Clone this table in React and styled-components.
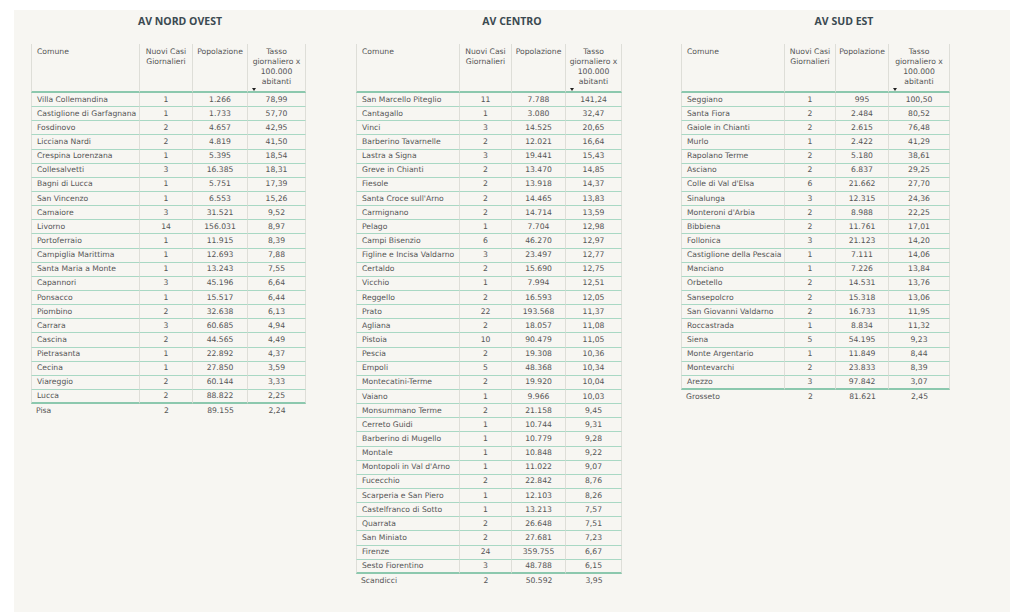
import React from 'react'
import styled, { createGlobalStyle } from 'styled-components'

const GlobalStyle = createGlobalStyle`
  html, body {
    margin: 0;
    padding: 0;
    background: #ffffff;
  }
  body {
    font-family: "DejaVu Sans", Verdana, sans-serif;
  }
`

const row = (s) => s.split('|')

const nordOvest = [
  'Villa Collemandina|1|1.266|78,99',
  'Castiglione di Garfagnana|1|1.733|57,70',
  'Fosdinovo|2|4.657|42,95',
  'Licciana Nardi|2|4.819|41,50',
  'Crespina Lorenzana|1|5.395|18,54',
  'Collesalvetti|3|16.385|18,31',
  'Bagni di Lucca|1|5.751|17,39',
  'San Vincenzo|1|6.553|15,26',
  'Camaiore|3|31.521|9,52',
  'Livorno|14|156.031|8,97',
  'Portoferraio|1|11.915|8,39',
  'Campiglia Marittima|1|12.693|7,88',
  'Santa Maria a Monte|1|13.243|7,55',
  'Capannori|3|45.196|6,64',
  'Ponsacco|1|15.517|6,44',
  'Piombino|2|32.638|6,13',
  'Carrara|3|60.685|4,94',
  'Cascina|2|44.565|4,49',
  'Pietrasanta|1|22.892|4,37',
  'Cecina|1|27.850|3,59',
  'Viareggio|2|60.144|3,33',
  'Lucca|2|88.822|2,25',
  'Pisa|2|89.155|2,24',
].map(row)

const centro = [
  'San Marcello Piteglio|11|7.788|141,24',
  'Cantagallo|1|3.080|32,47',
  'Vinci|3|14.525|20,65',
  'Barberino Tavarnelle|2|12.021|16,64',
  'Lastra a Signa|3|19.441|15,43',
  'Greve in Chianti|2|13.470|14,85',
  'Fiesole|2|13.918|14,37',
  "Santa Croce sull'Arno|2|14.465|13,83",
  'Carmignano|2|14.714|13,59',
  'Pelago|1|7.704|12,98',
  'Campi Bisenzio|6|46.270|12,97',
  'Figline e Incisa Valdarno|3|23.497|12,77',
  'Certaldo|2|15.690|12,75',
  'Vicchio|1|7.994|12,51',
  'Reggello|2|16.593|12,05',
  'Prato|22|193.568|11,37',
  'Agliana|2|18.057|11,08',
  'Pistoia|10|90.479|11,05',
  'Pescia|2|19.308|10,36',
  'Empoli|5|48.368|10,34',
  'Montecatini-Terme|2|19.920|10,04',
  'Vaiano|1|9.966|10,03',
  'Monsummano Terme|2|21.158|9,45',
  'Cerreto Guidi|1|10.744|9,31',
  'Barberino di Mugello|1|10.779|9,28',
  'Montale|1|10.848|9,22',
  "Montopoli in Val d'Arno|1|11.022|9,07",
  'Fucecchio|2|22.842|8,76',
  'Scarperia e San Piero|1|12.103|8,26',
  'Castelfranco di Sotto|1|13.213|7,57',
  'Quarrata|2|26.648|7,51',
  'San Miniato|2|27.681|7,23',
  'Firenze|24|359.755|6,67',
  'Sesto Fiorentino|3|48.788|6,15',
  'Scandicci|2|50.592|3,95',
].map(row)

const sudEst = [
  'Seggiano|1|995|100,50',
  'Santa Fiora|2|2.484|80,52',
  'Gaiole in Chianti|2|2.615|76,48',
  'Murlo|1|2.422|41,29',
  'Rapolano Terme|2|5.180|38,61',
  'Asciano|2|6.837|29,25',
  "Colle di Val d'Elsa|6|21.662|27,70",
  'Sinalunga|3|12.315|24,36',
  "Monteroni d'Arbia|2|8.988|22,25",
  'Bibbiena|2|11.761|17,01',
  'Follonica|3|21.123|14,20',
  'Castiglione della Pescaia|1|7.111|14,06',
  'Manciano|1|7.226|13,84',
  'Orbetello|2|14.531|13,76',
  'Sansepolcro|2|15.318|13,06',
  'San Giovanni Valdarno|2|16.733|11,95',
  'Roccastrada|1|8.834|11,32',
  'Siena|5|54.195|9,23',
  'Monte Argentario|1|11.849|8,44',
  'Montevarchi|2|23.833|8,39',
  'Arezzo|3|97.842|3,07',
  'Grosseto|2|81.621|2,45',
].map(row)

const areas = [
  { title: 'AV NORD OVEST', inset: 17, width: 275, cols: [109, 53, 55], rows: nordOvest },
  { title: 'AV CENTRO', inset: 10, width: 266, cols: [104, 52, 54], rows: centro },
  { title: 'AV SUD EST', inset: 3, width: 269, cols: [104, 51, 53], rows: sudEst },
]

const Page = styled.div`
  padding: 10px 14px 0;
`

const Panel = styled.main`
  background: #f7f6f2;
  min-height: 602px;
  display: grid;
  grid-template-columns: repeat(3, 1fr);
  align-items: start;
`

const Area = styled.section`
  padding-top: 5px;
  padding-left: ${(p) => p.$inset}px;
`

const Title = styled.h2`
  margin: 0 0 17px;
  margin-left: ${(p) => -p.$inset}px;
  text-align: center;
  font-family: "Open Sans", "Noto Sans", sans-serif;
  font-weight: 700;
  font-size: 10.5px;
  line-height: 12px;
  color: #3b4a51;
`

const Table = styled.table`
  width: ${(p) => p.$width}px;
  border-collapse: separate;
  border-spacing: 0;
  table-layout: fixed;
  font-size: 7.65px;
  color: #555555;
`

const Head = styled.th`
  box-sizing: border-box;
  height: 47px;
  padding: 3px 2px 0;
  vertical-align: top;
  font-weight: 400;
  line-height: 10px;
  white-space: nowrap;
  overflow: hidden;
  text-align: ${(p) => (p.$left ? 'left' : 'center')};
  border-right: 1px solid #deded8;
  border-bottom: 2px solid #8cc8ae;
  &:first-child {
    border-left: 1px solid #deded8;
    padding-left: 5px;
  }
`

const SortArrow = styled.span`
  display: block;
  width: 0;
  height: 0;
  margin: 1px 0 0 2px;
  border-left: 2.5px solid transparent;
  border-right: 2.5px solid transparent;
  border-top: 3px solid #222;
`

const Row = styled.tr`
  td {
    border-right: 1px solid #deded8;
    border-bottom: 1px solid #a9d8c4;
  }
  td:first-child {
    border-left: 1px solid #deded8;
  }
  &:nth-last-child(2) td {
    border-bottom: 2px solid #8cc8ae;
  }
  &:last-child td {
    border: none;
  }
`

const Cell = styled.td`
  box-sizing: border-box;
  height: 14.15px;
  padding: 0 ${(p) => (p.$left ? '3px 0 5px' : '4px')};
  line-height: 12px;
  white-space: nowrap;
  overflow: hidden;
  text-align: ${(p) => (p.$left ? 'left' : 'center')};
`

function AreaTable({ width, cols, rows }) {
  return (
    <Table $width={width}>
      <colgroup>
        {cols.map((w, i) => (
          <col key={i} style={{ width: w }} />
        ))}
        <col />
      </colgroup>
      <thead>
        <tr>
          <Head $left>Comune</Head>
          <Head>
            Nuovi Casi
            <br />
            Giornalieri
          </Head>
          <Head>Popolazione</Head>
          <Head>
            Tasso
            <br />
            giornaliero x
            <br />
            100.000
            <br />
            abitanti
            <SortArrow />
          </Head>
        </tr>
      </thead>
      <tbody>
        {rows.map((r) => (
          <Row key={r[0]}>
            <Cell $left>{r[0]}</Cell>
            <Cell>{r[1]}</Cell>
            <Cell>{r[2]}</Cell>
            <Cell>{r[3]}</Cell>
          </Row>
        ))}
      </tbody>
    </Table>
  )
}

export default function App() {
  return (
    <>
      <GlobalStyle />
      <Page>
        <Panel>
          {areas.map((a) => (
            <Area key={a.title} $inset={a.inset}>
              <Title $inset={a.inset}>{a.title}</Title>
              <AreaTable width={a.width} cols={a.cols} rows={a.rows} />
            </Area>
          ))}
        </Panel>
      </Page>
    </>
  )
}
